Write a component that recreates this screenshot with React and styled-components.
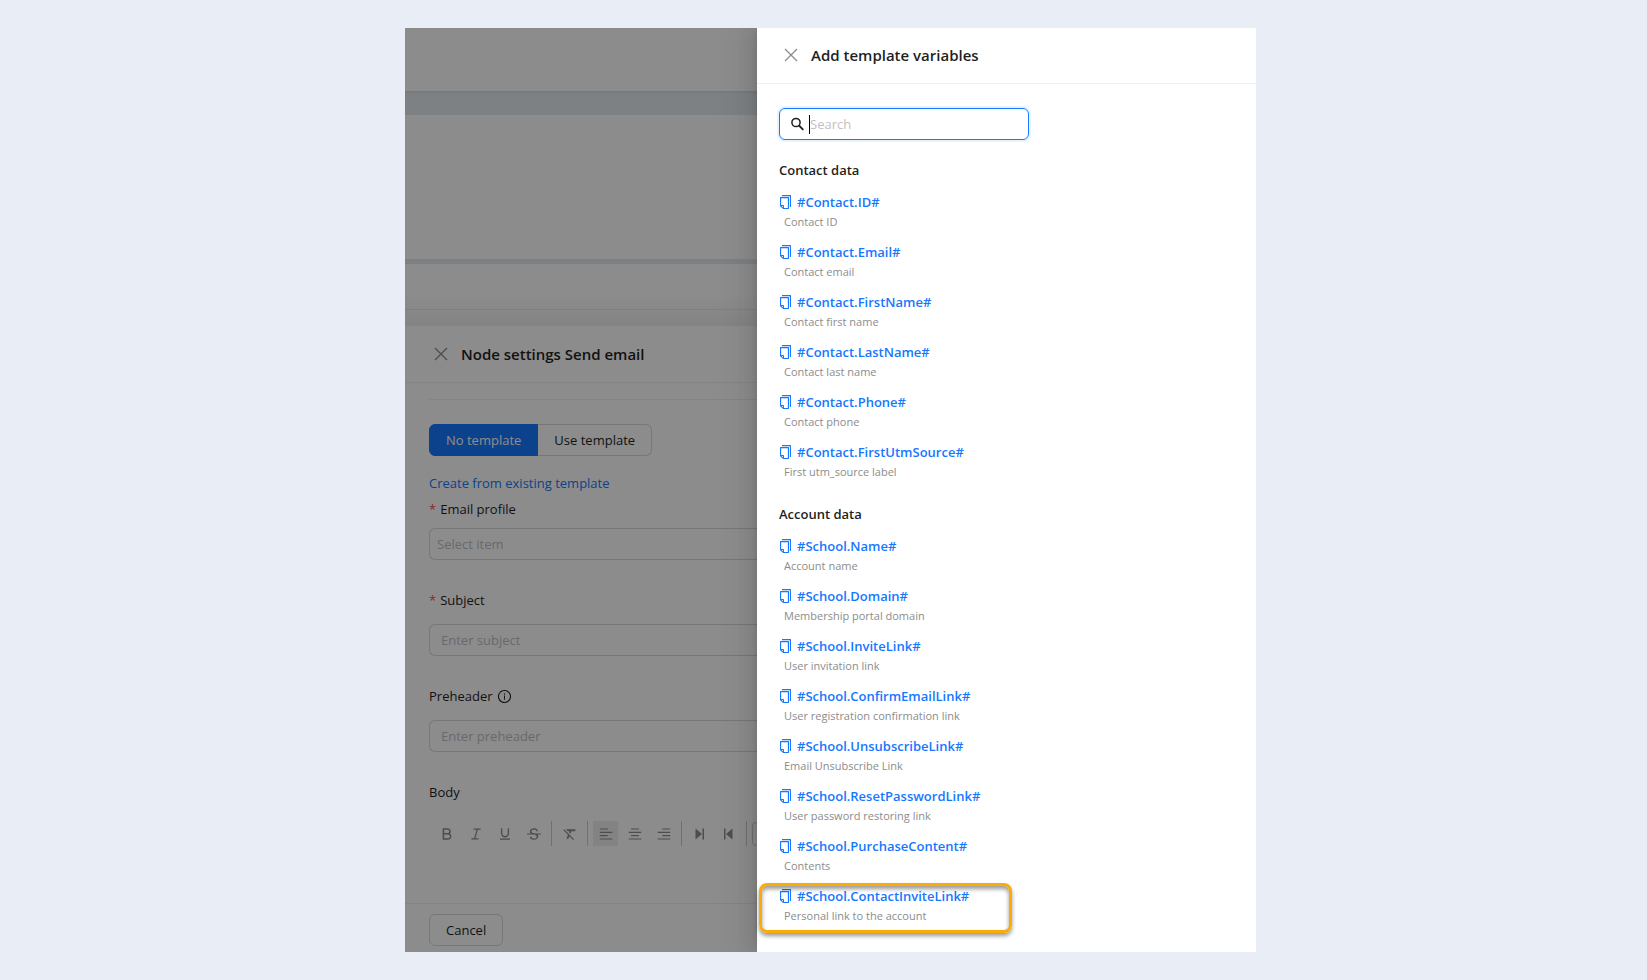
import React from "react";
import styled, { createGlobalStyle, css } from "styled-components";
import {
  AiOutlineAlignCenter,
  AiOutlineAlignLeft,
  AiOutlineAlignRight,
  AiOutlineBold,
  AiOutlineItalic,
  AiOutlineUnderline,
  AiOutlineStrikethrough,
  AiOutlineInfoCircle,
} from "react-icons/ai";
import { MdFormatClear } from "react-icons/md";

const GlobalStyle = createGlobalStyle`
  *,
  *::before,
  *::after {
    box-sizing: border-box;
  }
  body {
    margin: 0;
    background: #e9edf5;
    color: #1f1f1f;
    font-family: "Open Sans", "Noto Sans", sans-serif;
    font-size: 13px;
    line-height: 22px;
  }
  button,
  input {
    font: inherit;
    color: inherit;
  }
  h2,
  h3,
  p,
  ul {
    margin: 0;
    padding: 0;
  }
`;

const Page = styled.main`
  display: flex;
  min-height: 100vh;
  padding: 28px 391px 28px 405px;
  @media only screen and (max-width: 1300px) {
    padding: 28px;
  }
`;

const Window = styled.div`
  display: flex;
  flex: 1;
  min-width: 0;
  overflow: hidden;
  background: #fff;
`;

const Workspace = styled.div`
  position: relative;
  display: flex;
  flex-direction: column;
  flex: 1;
  min-width: 0;
  overflow: hidden;
`;

const Mask = styled.div`
  position: absolute;
  inset: 0;
  background: rgba(0, 0, 0, 0.45);
`;

const TopBar = styled.div`
  height: 63px;
`;

const Band = styled.div`
  height: ${(props) => (props.$thin ? "5px" : "24px")};
  background: #e4ebf0;
  box-shadow: ${(props) =>
    props.$thin ? "none" : "inset 0 2px 2px rgba(0, 0, 0, 0.05)"};
`;

const Canvas = styled.div`
  height: 144px;
`;

const StatusBar = styled.div`
  height: 62px;
  background: linear-gradient(#fff 32px, #f0f0f0 62px);
  &::before {
    content: "";
    display: block;
    height: 46px;
    border-bottom: 1px solid #e8e8e8;
  }
`;

const Settings = styled.section`
  display: flex;
  flex-direction: column;
  flex: 1;
`;

const PanelHeader = styled.header`
  display: flex;
  align-items: center;
  gap: 13px;
  height: ${(props) => (props.$inner ? "57px" : "56px")};
  padding: ${(props) => (props.$inner ? "0 29px" : "0 27px 2px")};
  border-bottom: 1px solid #f0f0f0;
  h2 {
    font-size: 15px;
    font-weight: 600;
    line-height: 24px;
    white-space: nowrap;
  }
`;

const CloseButton = styled.button`
  display: flex;
  padding: 0;
  border: none;
  background: none;
  color: #8c8c8c;
`;

const Form = styled.form`
  display: flex;
  flex-direction: column;
  flex: 1;
  padding: 16px 0 0 24px;
`;

const Divider = styled.hr`
  width: 100%;
  margin: 0 0 24px;
  border: none;
  border-top: 1px solid #f0f0f0;
`;

const Segmented = styled.div`
  display: flex;
`;

const segment = css`
  height: 32px;
  padding: 0 16px;
  border: 1px solid #d9d9d9;
  background: #fff;
  white-space: nowrap;
`;

const Segment = styled.button`
  ${segment}
  border-left: none;
  border-radius: 0 6px 6px 0;
  ${(props) =>
    props.$active &&
    css`
      border: 1px solid #1677ff;
      border-radius: 6px 0 0 6px;
      background: #1677ff;
      color: #fff;
    `}
`;

const TemplateLink = styled.a`
  margin: 16px 0 4px;
  color: #1677ff;
  text-decoration: none;
`;

const Field = styled.div`
  display: flex;
  flex-direction: column;
  gap: ${(props) => (props.$tight ? "8px" : "13px")};
  & + & {
    margin-top: 29px;
  }
`;

const Label = styled.label`
  display: flex;
  align-items: center;
  gap: 4px;
  height: 22px;
`;

const Required = styled.span`
  color: #ff4d4f;
`;

const TextInput = styled.input`
  height: 32px;
  padding: 0 ${(props) => (props.$select ? "7px" : "11px")};
  border: 1px solid #d9d9d9;
  border-right: none;
  border-radius: 6px 0 0 6px;
  outline: none;
  &::placeholder {
    color: #bfbfbf;
    opacity: 1;
  }
`;

const Toolbar = styled.div`
  display: flex;
  align-items: center;
  gap: 4px;
  height: 25px;
  margin-top: 18px;
  padding-left: 5px;
`;

const Tool = styled.button`
  display: flex;
  flex: none;
  align-items: center;
  justify-content: center;
  width: 25px;
  height: 25px;
  padding: 0;
  border: none;
  background: ${(props) => (props.$active ? "#efefef" : "none")};
  color: #8c8c8c;
`;

const Separator = styled.span`
  flex: none;
  width: 1px;
  height: 25px;
  margin: 0 1px;
  background: #ccc;
`;

const SizeBox = styled.span`
  flex: none;
  width: 60px;
  height: 24px;
  border: 1px solid #ccc;
  border-radius: 4px;
`;

const Footer = styled.footer`
  height: 49px;
  padding: 10px 24px 0;
  border-top: 1px solid #f0f0f0;
`;

const CancelButton = styled.button`
  ${segment}
  border-radius: 6px;
`;

const Drawer = styled.aside`
  position: relative;
  z-index: 1;
  flex: 0 0 499px;
  background: #fff;
  box-shadow: -6px 0 16px rgba(0, 0, 0, 0.08), -3px 0 6px -4px rgba(0, 0, 0, 0.12),
    -9px 0 28px 8px rgba(0, 0, 0, 0.05);
`;

const DrawerBody = styled.div`
  padding: 24px 22px;
`;

const SearchBox = styled.label`
  display: flex;
  align-items: center;
  width: 250px;
  height: 32px;
  padding: 0 11px;
  border: 1px solid #1677ff;
  border-radius: 6px;
  box-shadow: 0 0 0 2px rgba(5, 145, 255, 0.1);
`;

const Caret = styled.span`
  width: 1px;
  height: 19px;
  margin-left: 5px;
  background: #000;
`;

const SearchInput = styled.input`
  flex: 1;
  min-width: 0;
  padding: 0;
  border: none;
  outline: none;
  background: none;
  &::placeholder {
    color: #bfbfbf;
    opacity: 1;
  }
`;

const Group = styled.section`
  margin-top: 19px;
  h3 {
    margin-bottom: 10px;
    font-size: 13px;
    font-weight: 600;
    line-height: 22px;
  }
  & + & {
    margin-top: 22px;
  }
`;

const VariableList = styled.ul`
  display: flex;
  flex-direction: column;
  gap: 10px;
  list-style: none;
`;

const Variable = styled.li`
  position: relative;
  height: 40px;
  p {
    padding-left: 5px;
    color: #8c8c8c;
    font-size: 11px;
    line-height: 18px;
  }
  ${(props) =>
    props.$highlighted &&
    css`
      &::after {
        content: "";
        position: absolute;
        top: -2px;
        left: -20px;
        width: 253px;
        height: 50px;
        border: 3px solid #fbab05;
        border-radius: 8px;
        box-shadow: 0 3px 4px rgba(0, 0, 0, 0.4),
          inset 0 3px 4px rgba(0, 0, 0, 0.4);
        pointer-events: none;
      }
    `}
`;

const CopyButton = styled.button`
  display: flex;
  align-items: center;
  gap: 6px;
  padding: 0 0 0 1px;
  border: none;
  background: none;
  color: #1677ff;
  font-weight: 600;
  line-height: 22px;
`;

const CloseIcon = () => (
  <svg width="14" height="14" viewBox="0 0 14 14" fill="none" stroke="currentColor" strokeWidth="1.3">
    <path d="M1 1L13 13M13 1L1 13" />
  </svg>
);

const SearchIcon = () => (
  <svg width="13" height="14" viewBox="0 0 13 14" fill="none" stroke="currentColor" strokeWidth="1.5">
    <circle cx="5" cy="5.5" r="4.100" />
    <path d="M8 8.500L12.300 12.800" strokeWidth="1.800" />
  </svg>
);

const SkipIcon = ({ back }) => (
  <svg width="9" height="12" viewBox="0 0 9 12" fill="currentColor">
    {back ? (
      <path d="M0 0.500h1.500v11H0zM8.500 0.500v11L2 6z" />
    ) : (
      <path d="M0.500 0.500L7 6L0.500 11.500zM7.500 0.500H9v11H7.500z" />
    )}
  </svg>
);

const CopyIcon = () => (
  <svg width="11" height="14" viewBox="160 64 704 896" fill="currentColor">
    <path d="M832 64H296c-4.400 0-8 3.600-8 8v56c0 4.400 3.600 8 8 8h496v688c0 4.400 3.600 8 8 8h56c4.400 0 8-3.600 8-8V96c0-17.700-14.300-32-32-32z" />
    <path d="M704 192H192c-17.700 0-32 14.300-32 32v530.700c0 8.500 3.400 16.600 9.400 22.600l173.300 173.300c2.200 2.200 4.700 4 7.400 5.500v1.900h4.200c3.500 1.300 7.200 2 11 2H704c17.700 0 32-14.300 32-32V224c0-17.700-14.300-32-32-32zM350 856.200L263.900 770H350v86.200zM664 888H414V746c0-22.100-17.900-40-40-40H232V264h432v624z" />
  </svg>
);

const groups = [
  {
    title: "Contact data",
    items: [
      ["#Contact.ID#", "Contact ID"],
      ["#Contact.Email#", "Contact email"],
      ["#Contact.FirstName#", "Contact first name"],
      ["#Contact.LastName#", "Contact last name"],
      ["#Contact.Phone#", "Contact phone"],
      ["#Contact.FirstUtmSource#", "First utm_source label"],
    ],
  },
  {
    title: "Account data",
    items: [
      ["#School.Name#", "Account name"],
      ["#School.Domain#", "Membership portal domain"],
      ["#School.InviteLink#", "User invitation link"],
      ["#School.ConfirmEmailLink#", "User registration confirmation link"],
      ["#School.UnsubscribeLink#", "Email Unsubscribe Link"],
      ["#School.ResetPasswordLink#", "User password restoring link"],
      ["#School.PurchaseContent#", "Contents"],
      ["#School.ContactInviteLink#", "Personal link to the account"],
    ],
  },
];

const highlighted = "#School.ContactInviteLink#";

const App = () => {
  return (
    <>
      <GlobalStyle />
      <Page>
        <Window>
          <Workspace>
            <TopBar />
            <Band />
            <Canvas />
            <Band $thin />
            <StatusBar />
            <Settings>
              <PanelHeader $inner>
                <CloseButton type="button" aria-label="Close settings">
                  <CloseIcon />
                </CloseButton>
                <h2>Node settings Send email</h2>
              </PanelHeader>
              <Form>
                <Divider />
                <Segmented>
                  <Segment type="button" $active>
                    No template
                  </Segment>
                  <Segment type="button">Use template</Segment>
                </Segmented>
                <TemplateLink href="#">Create from existing template</TemplateLink>
                <Field $tight>
                  <Label htmlFor="profile">
                    <Required>*</Required>Email profile
                  </Label>
                  <TextInput id="profile" placeholder="Select item" $select />
                </Field>
                <Field>
                  <Label htmlFor="subject">
                    <Required>*</Required>Subject
                  </Label>
                  <TextInput id="subject" placeholder="Enter subject" />
                </Field>
                <Field>
                  <Label htmlFor="preheader">
                    Preheader <AiOutlineInfoCircle size={15} />
                  </Label>
                  <TextInput id="preheader" placeholder="Enter preheader" />
                </Field>
                <Field>
                  <Label as="span">Body</Label>
                </Field>
                <Toolbar>
                  <Tool type="button" aria-label="Bold"><AiOutlineBold size={16} /></Tool>
                  <Tool type="button" aria-label="Italic"><AiOutlineItalic size={16} /></Tool>
                  <Tool type="button" aria-label="Underline"><AiOutlineUnderline size={16} /></Tool>
                  <Tool type="button" aria-label="Strikethrough"><AiOutlineStrikethrough size={16} /></Tool>
                  <Separator />
                  <Tool type="button" aria-label="Clear format"><MdFormatClear size={16} /></Tool>
                  <Separator />
                  <Tool type="button" aria-label="Align left" $active><AiOutlineAlignLeft size={16} /></Tool>
                  <Tool type="button" aria-label="Align center"><AiOutlineAlignCenter size={16} /></Tool>
                  <Tool type="button" aria-label="Align right"><AiOutlineAlignRight size={16} /></Tool>
                  <Separator />
                  <Tool type="button" aria-label="Left to right"><SkipIcon /></Tool>
                  <Tool type="button" aria-label="Right to left"><SkipIcon back /></Tool>
                  <Separator />
                  <SizeBox />
                </Toolbar>
              </Form>
              <Footer>
                <CancelButton type="button">Cancel</CancelButton>
              </Footer>
            </Settings>
            <Mask />
          </Workspace>
          <Drawer>
            <PanelHeader>
              <CloseButton type="button" aria-label="Close">
                <CloseIcon />
              </CloseButton>
              <h2>Add template variables</h2>
            </PanelHeader>
            <DrawerBody>
              <SearchBox>
                <SearchIcon />
                <Caret />
                <SearchInput type="text" aria-label="Search" placeholder="Search" />
              </SearchBox>
              {groups.map((group) => (
                <Group key={group.title}>
                  <h3>{group.title}</h3>
                  <VariableList>
                    {group.items.map(([name, text]) => (
                      <Variable key={name} $highlighted={name === highlighted}>
                        <CopyButton type="button">
                          <CopyIcon />
                          {name}
                        </CopyButton>
                        <p>{text}</p>
                      </Variable>
                    ))}
                  </VariableList>
                </Group>
              ))}
            </DrawerBody>
          </Drawer>
        </Window>
      </Page>
    </>
  );
};

export default App;
